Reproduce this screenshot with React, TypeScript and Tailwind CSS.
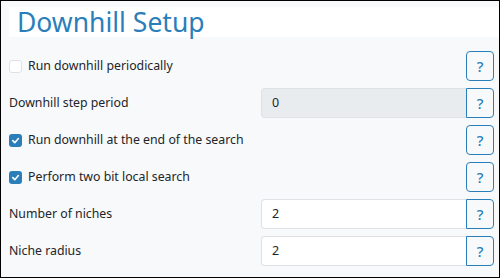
import React from "react";

const font = { fontFamily: '"Noto Sans", "Open Sans", sans-serif' };

function HelpBtn({ joined }: { joined?: boolean }) {
  return (
    <button
      className={
        "w-[28px] h-[30px] shrink-0 border border-[#2a7fba] text-[#2a7fba] bg-transparent flex items-center justify-center text-[15px] font-medium " +
        (joined ? "rounded-r-[4px]" : "rounded-[4px]")
      }
    >
      ?
    </button>
  );
}

function CheckRow({ label, checked }: { label: string; checked: boolean }) {
  return (
    <div className="flex items-center h-[30px]">
      <div className="flex items-center flex-1">
        {checked ? (
          <span className="w-[13px] h-[13px] rounded-[3px] bg-[#2a7fba] flex items-center justify-center">
            <svg width="9" height="9" viewBox="0 0 10 10">
              <path d="M2 5.2 L4.2 7.4 L8.2 2.8" fill="none" stroke="white" strokeWidth="1.8" strokeLinecap="round" strokeLinejoin="round" />
            </svg>
          </span>
        ) : (
          <span className="w-[13px] h-[13px] rounded-[3px] bg-white border border-[#dee2e6]" />
        )}
        <span className="ml-[6px] text-[12.3px] text-[#212529]">{label}</span>
      </div>
      <HelpBtn />
    </div>
  );
}

function InputRow({ label, value, disabled }: { label: string; value: string; disabled?: boolean }) {
  return (
    <div className="flex items-center h-[30px]">
      <div className="w-[252px] text-[12.3px] text-[#212529]">{label}</div>
      <div
        className={
          "flex-1 h-[30px] border border-r-0 border-[#dee2e6] rounded-l-[4px] flex items-center pl-[10px] text-[12.5px] text-[#212529] " +
          (disabled ? "bg-[#e9ecef]" : "bg-white")
        }
      >
        {value}
      </div>
      <HelpBtn joined />
    </div>
  );
}

export default function App() {
  return (
    <div className="w-[500px] h-[278px] border border-black bg-[#f8f9fa] overflow-hidden" style={font}>
      <div className="mt-[6px] ml-[8px] h-[30px] bg-white flex items-center pl-[8px]">
        <span className="text-[26.5px] leading-none text-[#2a7fba] mt-[1px]">Downhill Setup</span>
      </div>
      <div className="pl-[8px] pr-[5px] mt-[14px] flex flex-col gap-[7px]">
        <CheckRow label="Run downhill periodically" checked={false} />
        <InputRow label="Downhill step period" value="0" disabled />
        <CheckRow label="Run downhill at the end of the search" checked />
        <CheckRow label="Perform two bit local search" checked />
        <InputRow label="Number of niches" value="2" />
        <InputRow label="Niche radius" value="2" />
      </div>
    </div>
  );
}
